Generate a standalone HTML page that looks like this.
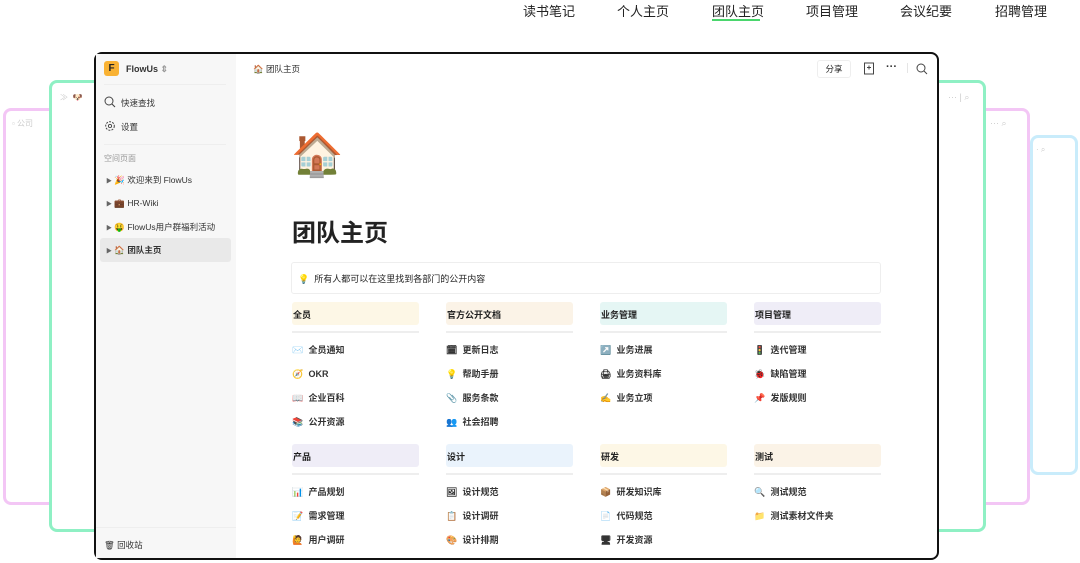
<!DOCTYPE html>
<html><head><meta charset="utf-8"><style>
*{margin:0;padding:0;box-sizing:border-box}
body{width:1080px;height:563px;overflow:hidden;background:#fff;font-family:"Liberation Sans","Noto Sans CJK SC",sans-serif;color:#222;position:relative}
.a{position:absolute}
.nav{top:1px;font-size:13px;color:#222}
.frame{position:absolute;border-radius:8px;background:#fff}
.side{position:absolute;left:96px;top:54px;width:140px;height:504px;background:#f7f7f7}
.si{position:absolute;font-size:8.5px;color:#333;white-space:nowrap;line-height:12px}
.hd{position:absolute;height:23px;width:127px;border-radius:3px;font-size:9px;font-weight:bold;padding:6px 1px;color:#222}
.ln{position:absolute;height:2px;width:127px;background:#eee}
.it{position:absolute;font-size:9px;font-weight:bold;color:#333;white-space:nowrap;line-height:12px;height:12px}
.it span{display:inline-block;width:14px;font-size:9px;line-height:12px;vertical-align:top}
</style></head><body>
<div class="a nav" style="left:523px">读书笔记</div>
<div class="a nav" style="left:617px">个人主页</div>
<div class="a nav" style="left:712px">团队主页</div>
<div class="a" style="left:712px;top:19px;width:48px;height:2px;background:#4ad66d"></div>
<div class="a nav" style="left:806px">项目管理</div>
<div class="a nav" style="left:900px">会议纪要</div>
<div class="a nav" style="left:995px">招聘管理</div>

<div class="frame" style="left:1030px;top:135px;width:48px;height:340px;border:3px solid #c9ecfb"></div>
<div class="frame" style="left:3px;top:108px;width:1027px;height:397px;border:3px solid #f3c6f5"></div>
<div class="frame" style="left:49px;top:80px;width:937px;height:452px;border:3px solid #8ff0c4"></div>
<div class="a" style="left:60px;top:92px;font-size:8px;color:#ccc">≫ &nbsp;🐶</div>
<div class="a" style="left:12px;top:118px;font-size:8px;color:#ccc">▫ 公司</div>
<div class="a" style="left:948px;top:92px;font-size:9px;color:#ccc">··· | ⌕</div>
<div class="a" style="left:990px;top:118px;font-size:9px;color:#ccc">··· ⌕</div>
<div class="a" style="left:1036px;top:145px;font-size:8px;color:#ccc">· ⌕</div>

<div class="frame" style="left:94px;top:52px;width:845px;height:508px;border:2px solid #111;overflow:hidden"></div>
<div class="side"></div>
<div class="a" style="left:104px;top:61px;width:15px;height:15px;background:#f9b233;border-radius:3px;font-size:10px;font-weight:bold;text-align:center;line-height:15px">F</div>
<div class="si" style="left:126px;top:63px;font-weight:bold;font-size:9px">FlowUs <span style="color:#999">⇕</span></div>
<div class="a" style="left:104px;top:84px;width:122px;height:1px;background:#eee"></div>
<svg class="a" style="left:104px;top:96px" width="12" height="12" viewBox="0 0 12 12"><circle cx="5" cy="5" r="4" fill="none" stroke="#444" stroke-width="1"/><path d="M8 8L11 11" stroke="#444" stroke-width="1.1"/></svg>
<div class="si" style="left:121px;top:97px">快速查找</div>
<svg class="a" style="left:104px;top:120px" width="12" height="12" viewBox="0 0 12 12"><circle cx="6" cy="6" r="4.3" fill="none" stroke="#444" stroke-width="1" stroke-dasharray="2 1.2"/><circle cx="6" cy="6" r="1.6" fill="none" stroke="#444" stroke-width="0.9"/></svg>
<div class="si" style="left:121px;top:121px">设置</div>
<div class="a" style="left:104px;top:144px;width:122px;height:1px;background:#eee"></div>
<div class="si" style="left:104px;top:153px;color:#999;font-size:8px">空间页面</div>
<div class="si" style="left:106px;top:174px"><span style="font-size:6px;color:#666">▶</span> 🎉 欢迎来到 FlowUs</div>
<div class="si" style="left:106px;top:197px"><span style="font-size:6px;color:#666">▶</span> 💼 HR-Wiki</div>
<div class="si" style="left:106px;top:221px"><span style="font-size:6px;color:#666">▶</span> 🤑 FlowUs用户群福利活动</div>
<div class="a" style="left:100px;top:238px;width:131px;height:24px;background:#e9e9e9;border-radius:3px"></div>
<div class="si" style="left:106px;top:244px;font-weight:bold"><span style="font-size:6px;color:#666">▶</span> 🏠 团队主页</div>
<div class="a" style="left:96px;top:527px;width:140px;height:1px;background:#eee"></div>
<div class="si" style="left:104px;top:539px">🗑 回收站</div>

<div class="si" style="left:253px;top:63px">🏠 团队主页</div>
<div class="a" style="left:817px;top:60px;width:34px;height:18px;border:1px solid #eee;border-radius:3px;font-size:8.5px;text-align:center;line-height:16px">分享</div>
<svg class="a" style="left:863px;top:62px" width="12" height="13" viewBox="0 0 12 13"><rect x="1.5" y="1" width="9" height="11" fill="none" stroke="#444"/><path d="M6 3.5v4M4 5.5h4" stroke="#444"/></svg>
<div class="a" style="left:886px;top:61px;font-size:11px;color:#333;font-weight:bold">···</div>
<div class="a" style="left:907px;top:63px;width:1px;height:10px;background:#e5e5e5"></div>
<svg class="a" style="left:916px;top:63px" width="12" height="12" viewBox="0 0 12 12"><circle cx="5" cy="5" r="4" fill="none" stroke="#444"/><path d="M8 8L11 11" stroke="#444"/></svg>

<div class="a" style="left:291px;top:130px;font-size:42px;line-height:50px">🏠</div>
<div class="a" style="left:292px;top:213px;font-size:24px;font-weight:bold">团队主页</div>
<div class="a" style="left:291px;top:262px;width:590px;height:32px;border:1px solid #eee;border-radius:3px;font-size:9px;padding:9px 6px">💡 &nbsp;所有人都可以在这里找到各部门的公开内容</div>

<div class="hd" style="left:292px;top:302px;background:#fdf7e6">全员</div>
<div class="hd" style="left:446px;top:302px;background:#fbf3e7">官方公开文档</div>
<div class="hd" style="left:600px;top:302px;background:#e5f6f4">业务管理</div>
<div class="hd" style="left:754px;top:302px;background:#efedf7">项目管理</div>
<div class="ln" style="left:292px;top:331px"></div><div class="ln" style="left:446px;top:331px"></div><div class="ln" style="left:600px;top:331px"></div><div class="ln" style="left:754px;top:331px"></div>
<div class="it" style="left:292px;top:344px"><span>✉️</span> 全员通知</div>
<div class="it" style="left:292px;top:368px"><span>🧭</span> OKR</div>
<div class="it" style="left:292px;top:392px"><span>📖</span> 企业百科</div>
<div class="it" style="left:292px;top:416px"><span>📚</span> 公开资源</div>
<div class="it" style="left:446px;top:344px"><span>🗓</span> 更新日志</div>
<div class="it" style="left:446px;top:368px"><span>💡</span> 帮助手册</div>
<div class="it" style="left:446px;top:392px"><span>📎</span> 服务条款</div>
<div class="it" style="left:446px;top:416px"><span>👥</span> 社会招聘</div>
<div class="it" style="left:600px;top:344px"><span>↗️</span> 业务进展</div>
<div class="it" style="left:600px;top:368px"><span>🖨</span> 业务资料库</div>
<div class="it" style="left:600px;top:392px"><span>✍️</span> 业务立项</div>
<div class="it" style="left:754px;top:344px"><span>🚦</span> 迭代管理</div>
<div class="it" style="left:754px;top:368px"><span>🐞</span> 缺陷管理</div>
<div class="it" style="left:754px;top:392px"><span>📌</span> 发版规则</div>

<div class="hd" style="left:292px;top:444px;background:#efedf7">产品</div>
<div class="hd" style="left:446px;top:444px;background:#eaf3fc">设计</div>
<div class="hd" style="left:600px;top:444px;background:#fdf7e6">研发</div>
<div class="hd" style="left:754px;top:444px;background:#fbf3e7">测试</div>
<div class="ln" style="left:292px;top:473px"></div><div class="ln" style="left:446px;top:473px"></div><div class="ln" style="left:600px;top:473px"></div><div class="ln" style="left:754px;top:473px"></div>
<div class="it" style="left:292px;top:486px"><span>📊</span> 产品规划</div>
<div class="it" style="left:292px;top:510px"><span>📝</span> 需求管理</div>
<div class="it" style="left:292px;top:534px"><span>🙋</span> 用户调研</div>
<div class="it" style="left:446px;top:486px"><span>🖼</span> 设计规范</div>
<div class="it" style="left:446px;top:510px"><span>📋</span> 设计调研</div>
<div class="it" style="left:446px;top:534px"><span>🎨</span> 设计排期</div>
<div class="it" style="left:600px;top:486px"><span>📦</span> 研发知识库</div>
<div class="it" style="left:600px;top:510px"><span>📄</span> 代码规范</div>
<div class="it" style="left:600px;top:534px"><span>🖥</span> 开发资源</div>
<div class="it" style="left:754px;top:486px"><span>🔍</span> 测试规范</div>
<div class="it" style="left:754px;top:510px"><span>📁</span> 测试素材文件夹</div>
</body></html>
